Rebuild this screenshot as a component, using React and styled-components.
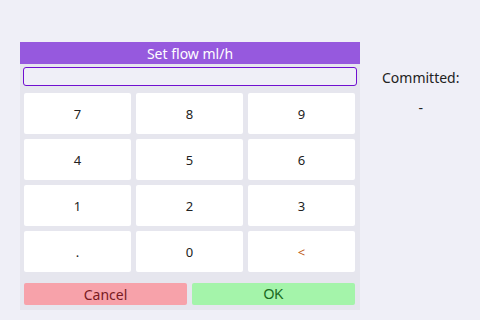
import styled, { createGlobalStyle } from "styled-components";

const GlobalStyle = createGlobalStyle`
  html, body {
    margin: 0;
    padding: 0;
    background: #efeff7;
    font-family: "Noto Sans", "Lato", sans-serif;
  }
`;

const Screen = styled.div`
  width: 480px;
  height: 320px;
  display: flex;
  align-items: flex-start;
  padding: 42px 0 0 20px;
  box-sizing: border-box;
`;

const Panel = styled.div`
  width: 340px;
  height: 268px;
  background: #e6e6ee;
  display: flex;
  flex-direction: column;
`;

const Header = styled.div`
  height: 22px;
  background: #9659de;
  color: #ffffff;
  font-size: 14px;
  display: flex;
  align-items: center;
  justify-content: center;
`;

const Input = styled.div`
  margin: 3px 3px 0 3px;
  height: 17px;
  border: 1.5px solid #7010d0;
  border-radius: 3px;
  background: #efeff7;
`;

const Keypad = styled.div`
  display: grid;
  grid-template-columns: repeat(3, 107px);
  grid-auto-rows: 41px;
  gap: 5px;
  padding: 7px 4px 0 4px;
`;

const Key = styled.div`
  background: #ffffff;
  border-radius: 2px;
  display: flex;
  align-items: center;
  justify-content: center;
  font-size: 13px;
  color: ${(p) => p.$color || "#222222"};
`;

const Actions = styled.div`
  display: flex;
  gap: 5px;
  padding: 11px 5px 0 4px;
`;

const ActionButton = styled.div`
  flex: 1;
  height: 22px;
  border-radius: 2px;
  background: ${(p) => p.$bg};
  color: ${(p) => p.$color};
  font-size: 14px;
  font-family: ${(p) => p.$font || "inherit"};
  display: flex;
  align-items: center;
  justify-content: center;
`;

const Side = styled.div`
  margin-left: 22px;
  margin-top: 26px;
  display: flex;
  flex-direction: column;
  align-items: center;
  gap: 11px;
  color: #222222;
  font-size: 14px;
`;

const keys = ["7", "8", "9", "4", "5", "6", "1", "2", "3", ".", "0", "<"];

export default function App() {
  return (
    <>
      <GlobalStyle />
      <Screen>
        <Panel>
          <Header>Set flow ml/h</Header>
          <Input />
          <Keypad>
            {keys.map((k) => (
              <Key key={k} $color={k === "<" ? "#c05a10" : undefined}>
                {k}
              </Key>
            ))}
          </Keypad>
          <Actions>
            <ActionButton $bg="#f7a2aa" $color="#7a1a22">
              Cancel
            </ActionButton>
            <ActionButton
              $bg="#a4f4aa"
              $color="#1a6a22"
              $font='"Liberation Sans", Arial, sans-serif'
            >
              OK
            </ActionButton>
          </Actions>
        </Panel>
        <Side>
          <span>Committed:</span>
          <span>-</span>
        </Side>
      </Screen>
    </>
  );
}
